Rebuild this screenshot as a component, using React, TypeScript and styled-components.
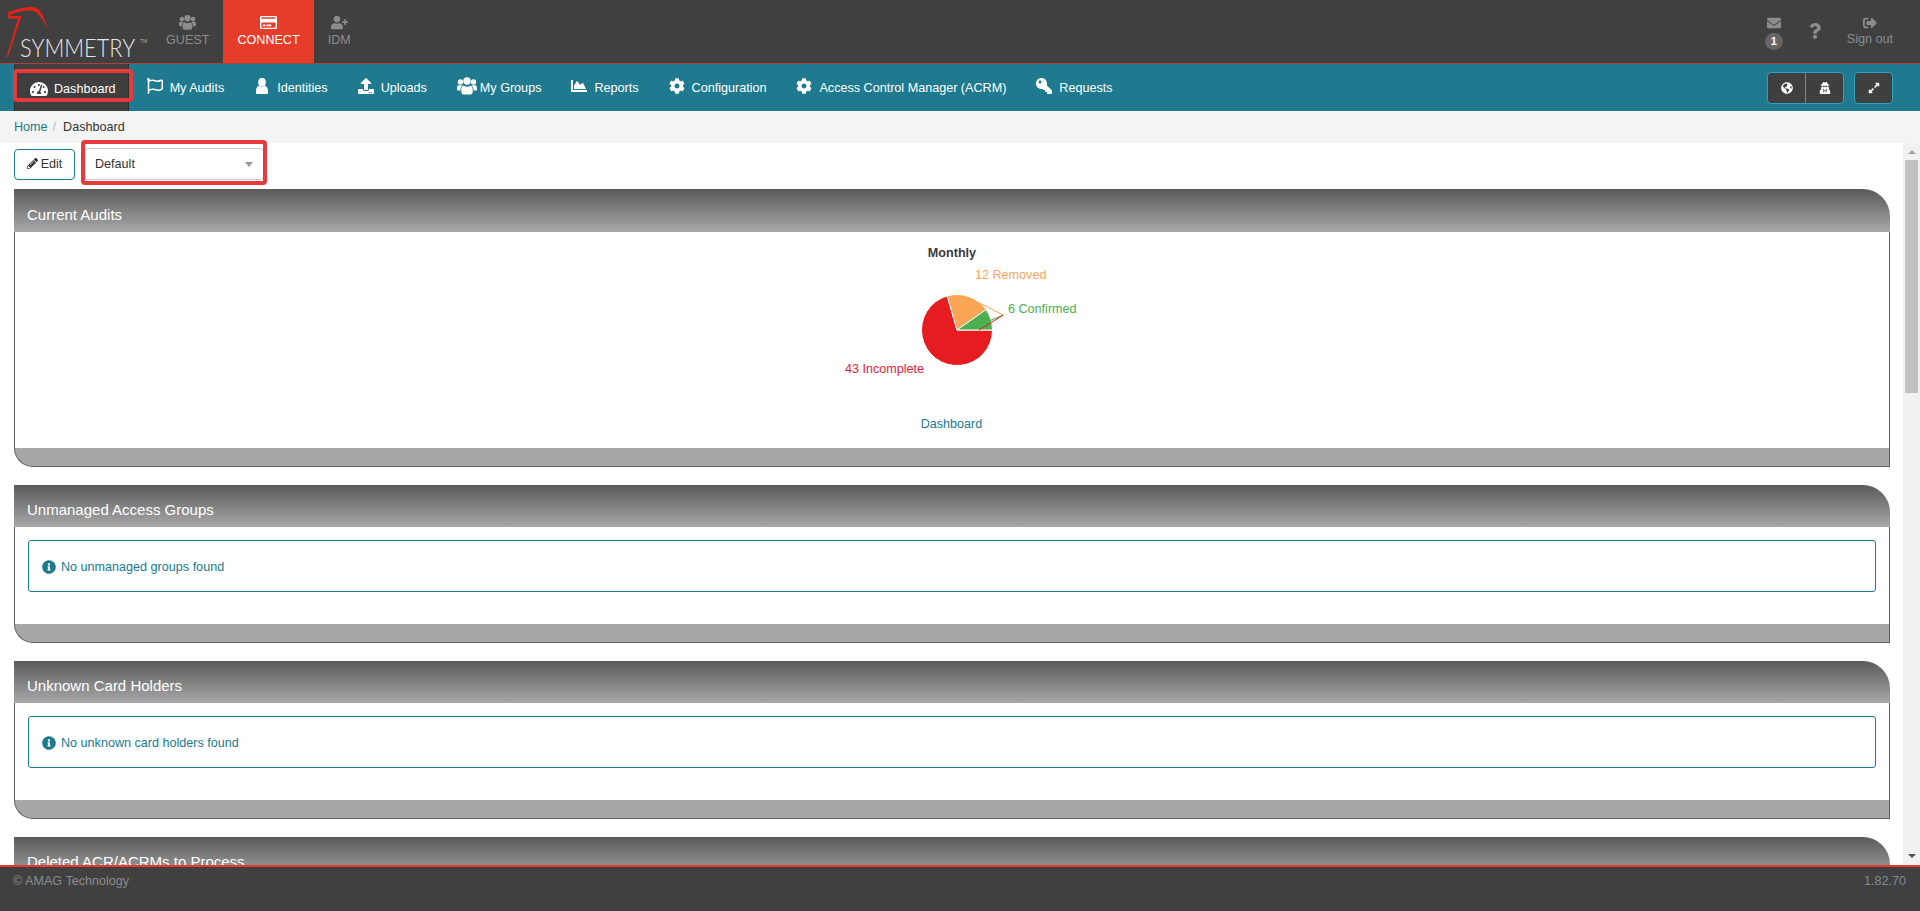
import styled, { createGlobalStyle } from "styled-components";
import {
  FaRegCreditCard, FaUserPlus, FaEnvelope, FaQuestion, FaSignOutAlt, FaTachometerAlt,
  FaRegFlag, FaUpload, FaChartArea, FaCog, FaKey, FaGlobeAmericas, FaUserSecret,
  FaExpandAlt, FaPencilAlt, FaInfoCircle,
} from "react-icons/fa";

const Global = createGlobalStyle`
  html, body { margin: 0; padding: 0; height: 100%; overflow: hidden; }
  body { font-family: "Liberation Sans", Arial, sans-serif; font-size: 12.6px; color: #333; background: #fff; }
`;

const Page = styled.div`
  height: 911px;
  display: flex;
  flex-direction: column;
  overflow: hidden;
`;

const Header = styled.header`
  height: 63px;
  flex: none;
  display: flex;
  background: #404040;
  border-bottom: 1px solid #a5453a;
`;

const LogoBox = styled.div`
  width: 152px;
  height: 63px;
  flex: none;
`;

const Tab = styled.div<{ $on?: boolean }>`
  padding: 14px 14px 0;
  display: flex;
  flex-direction: column;
  align-items: center;
  gap: 2px;
  background: ${(p) => (p.$on ? "#e63d2b" : "transparent")};
  color: ${(p) => (p.$on ? "#fff" : "#8c8c8c")};
  line-height: 15px;
  svg { height: 17px; width: 17px; }
`;

const HeaderRight = styled.div`
  margin-left: auto;
  padding-right: 27px;
  display: flex;
  gap: 24px;
  color: #8c8c8c;
`;

const HeadCol = styled.div`
  padding-top: 16px;
  display: flex;
  flex-direction: column;
  align-items: center;
  line-height: 15px;
  svg { width: 14px; height: 14px; }
`;

const HelpCol = styled(HeadCol)`
  padding-top: 23px;
  svg { width: 16px; height: 16px; }
`;

const Badge = styled.span`
  width: 18px;
  height: 17px;
  margin-top: 3px;
  border-radius: 50%;
  background: #666;
  color: #fff;
  font-size: 11px;
  font-weight: bold;
  line-height: 17px;
  text-align: center;
`;

const SignLabel = styled.span`
  margin-top: 2px;
`;

const NavBar = styled.nav`
  height: 47px;
  flex: none;
  display: flex;
  align-items: stretch;
  padding: 0 27px 0 14px;
  background: #207a8f;
`;

const NavItem = styled.div`
  display: flex;
  align-items: center;
  gap: 7px;
  padding: 0 15px;
  color: #fff;
  white-space: nowrap;
  svg { width: 16px; height: 16px; flex: none; position: relative; top: -2px; }
`;

const ActiveItem = styled(NavItem)`
  position: relative;
  gap: 6px;
  padding: 2px 12px 0 15px;
  margin-right: 3px;
  background: #3f3f3f;
  border: solid #2e2e2e;
  border-width: 0 1px;
  svg { width: 18px; height: 18px; top: 0; }
`;

const RedBox = styled.span`
  position: absolute;
  top: 5px;
  bottom: 9px;
  left: -2px;
  right: -5px;
  border: 4px solid #e8393d;
  border-radius: 4px;
`;

const FlippedKey = styled(FaKey)`
  transform: scaleX(-1);
`;

const WideUsers = styled(UsersIcon)`
  && { width: 20px; height: 18px; margin: 0 -4px 0 0; }
`;

const NavRight = styled.div`
  margin-left: auto;
  display: flex;
  align-items: center;
  gap: 10px;
`;

const BtnGroup = styled.div`
  display: flex;
  height: 30px;
  border: 1px solid #2ea3bd;
  border-radius: 4px;
  background: #3f3f3f;
  color: #fff;
  & > div + div { border-left: 1px solid #2ea3bd; }
`;

const GroupBtn = styled.div`
  width: 37px;
  display: flex;
  align-items: center;
  justify-content: center;
  svg { width: 12px; height: 12px; }
`;

const Crumbs = styled.div`
  height: 32px;
  flex: none;
  display: flex;
  align-items: center;
  padding-left: 14px;
  background: #f4f4f4;
  border-radius: 0 0 4px 4px;
  a { color: #207a8f; }
  i { color: #bbb; font-style: normal; margin: 0 7px 0 5px; }
`;

const Body = styled.div`
  flex: 1;
  min-height: 0;
  display: flex;
`;

const Main = styled.main`
  flex: 1;
  min-width: 0;
  padding: 5px 13px 0 14px;
`;

const Toolbar = styled.div`
  display: flex;
  gap: 9px;
  height: 32px;
  margin-bottom: 9px;
`;

const EditBtn = styled.div`
  width: 61px;
  height: 31px;
  margin-top: 1px;
  padding-bottom: 2px;
  box-sizing: border-box;
  display: flex;
  align-items: center;
  justify-content: center;
  gap: 3px;
  border: 1px solid #207a8f;
  border-radius: 4px;
  svg { width: 11px; height: 11px; }
`;

const SelectBox = styled.div`
  position: relative;
  width: 180px;
  height: 32px;
  box-sizing: border-box;
  display: flex;
  align-items: center;
  padding-left: 10px;
  border: 1px solid #ccc;
  border-radius: 4px;
  &::before {
    content: "";
    position: absolute;
    right: 10px;
    top: 13px;
    border: 4px solid transparent;
    border-top: 5px solid #999;
    border-bottom: 0;
  }
  &::after {
    content: "";
    position: absolute;
    inset: -9px -4px -6px;
    border: 4px solid #e8393d;
    border-radius: 4px;
  }
`;

const Panel = styled.section`
  margin-bottom: 18px;
`;

const PanelHead = styled.div<{ $tall?: boolean }>`
  height: ${(p) => (p.$tall ? "43px" : "42px")};
  box-sizing: border-box;
  padding: 0 13px 8px;
  display: flex;
  align-items: flex-end;
  background: linear-gradient(#5a5a5a, #a8a8a8);
  border-radius: 0 27px 0 0;
  color: #fff;
  font-size: 15px;
  line-height: 18px;
`;

const PanelBody = styled.div`
  height: 97px;
  box-sizing: border-box;
  padding: 13px 13px 0;
  border-left: 1px solid #5f5f5f;
  border-right: 1px solid #5f5f5f;
`;

const ChartBody = styled(PanelBody)`
  height: 216px;
  padding: 8px 0 0;
  display: flex;
  flex-direction: column;
  align-items: center;
`;

const PanelFoot = styled.div`
  height: 19px;
  box-sizing: border-box;
  background: #a6a6a6;
  border: 1px solid #5f5f5f;
  border-top: 0;
  border-radius: 0 0 0 20px;
`;

const Chart = styled.svg`
  width: 400px;
  height: 160px;
  flex: none;
  font-family: "Liberation Sans", Arial, sans-serif;
  font-size: 12.6px;
`;

const ChartLink = styled.a`
  margin-top: 17px;
  margin-left: -1px;
  line-height: 14px;
  color: #207a8f;
`;

const Alert = styled.div`
  height: 52px;
  box-sizing: border-box;
  display: flex;
  align-items: center;
  gap: 5px;
  padding: 2px 0 0 13px;
  border: 1px solid #207a8f;
  border-radius: 3px;
  color: #207a8f;
  svg { width: 14px; height: 14px; }
`;

const Scrollbar = styled.div`
  width: 17px;
  flex: none;
  display: flex;
  flex-direction: column;
  align-items: center;
  background: #f1f1f1;
`;

const ArrowUp = styled.span`
  margin-top: 7px;
  border: 4px solid transparent;
  border-bottom: 4px solid #a3a3a3;
  border-top: 0;
`;

const Thumb = styled.div`
  width: 13px;
  height: 233px;
  margin-top: 6px;
  background: #c1c1c1;
`;

const ArrowDown = styled.span`
  margin-top: auto;
  margin-bottom: 7px;
  border: 4px solid transparent;
  border-top: 4px solid #505050;
  border-bottom: 0;
`;

const Footer = styled.footer`
  position: relative;
  height: 46px;
  flex: none;
  box-sizing: border-box;
  display: flex;
  justify-content: space-between;
  padding: 7px 14px 0 13px;
  background: #404040;
  border-top: 2px solid #e8392c;
  color: #8c8c8c;
  line-height: 15px;
`;

const Version = styled.span`
  color: #7f8c96;
`;

function UsersIcon({ className }: { className?: string }) {
  return (
    <svg className={className} viewBox="0 0 20 18" fill="currentColor">
      <circle cx="3.5" cy="5" r="2.7" />
      <circle cx="16.5" cy="5" r="2.7" />
      <circle cx="10" cy="4" r="3.7" />
      <path d="M1.5 8.2h3l.7.8C4 10 3.4 11.6 3.4 13.5H1.2C.5 13.5 0 13 0 12.2 0 10 .3 8.2 1.5 8.2z" />
      <path d="M18.5 8.2h-3l-.7.8c1.2 1 1.8 2.6 1.8 4.5h2.2c.7 0 1.2-.5 1.2-1.3 0-2.2-.3-4-1.5-4z" />
      <path d="M6.5 8.6c1 .8 2.2 1.2 3.5 1.2s2.5-.4 3.5-1.2c1.8.3 2.3 3 2.3 5.6 0 2-1 3.3-2.6 3.3H6.8c-1.6 0-2.6-1.3-2.6-3.3 0-2.6.5-5.3 2.3-5.6z" />
    </svg>
  );
}

const UserIcon = () => (
  <svg viewBox="0 0 16 16" fill="currentColor">
    <ellipse cx="8" cy="4.4" rx="3.8" ry="4.3" />
    <path d="M2 15v-2.2c0-2.8 1.6-4.8 3.4-4.8.7.6 1.6 1 2.6 1s1.9-.4 2.6-1c1.8 0 3.4 2 3.4 4.8V15c0 .6-.5 1-1 1H3c-.5 0-1-.4-1-1z" />
  </svg>
);

const Logo = () => (
  <svg width="152" height="63" viewBox="0 0 152 63">
    <path
      fill="#e2231a"
      d="M8 12.5C17 9 28 6 35 7.5c6 2 10 11 12.5 21.5C43 19 38 12 32 10.5 25 10 16 12 11 14.5v1.5h10.5L8 57H6.5L18 18.5H8.5z"
    />
    <text transform="translate(20 57) scale(.84 1)" fill="#e6e6e6" fontFamily="Lato, sans-serif" fontWeight="300" fontSize="26">
      SYMMETRY
    </text>
    <text x="140" y="43" fill="#aaa" fontFamily="Liberation Sans, sans-serif" fontSize="5">
      TM
    </text>
  </svg>
);

const PieChart = () => (
  <Chart viewBox="0 0 400 160">
    <text x="200" y="17" textAnchor="middle" fontWeight="bold" fill="#3a3a3a">Monthly</text>
    <text x="223" y="38.5" fill="#fba55a">12 Removed</text>
    <text x="256" y="73" fill="#4caf50">6 Confirmed</text>
    <text x="93" y="133" fill="#e81c3a">43 Incomplete</text>
    <g stroke="#fff" strokeWidth="1">
      <path fill="#e71c20" d="M205 90h35.5A35.5 35.5 0 1 1 195.2 55.9z" />
      <path fill="#faa654" d="M205 90L195.2 55.9A35.5 35.5 0 0 1 234.1 69.6z" />
      <path fill="#4caf50" d="M205 90L234.1 69.6A35.5 35.5 0 0 1 240.5 90z" />
    </g>
    <g fill="none">
      <path stroke="#faa654" d="M228 63.3L251.3 75" />
      <path stroke="#4caf50" d="M238 80.7L251.3 75" />
      <path stroke="#e71c20" d="M227 90L251.3 75" />
    </g>
  </Chart>
);

const menu = [
  { label: "My Audits", icon: <FaRegFlag /> },
  { label: "Identities", icon: <UserIcon /> },
  { label: "Uploads", icon: <FaUpload /> },
  { label: "My Groups", icon: <WideUsers /> },
  { label: "Reports", icon: <FaChartArea /> },
  { label: "Configuration", icon: <FaCog /> },
  { label: "Access Control Manager (ACRM)", icon: <FaCog /> },
  { label: "Requests", icon: <FlippedKey /> },
];

const EmptyPanel = ({ title, text }: { title: string; text: string }) => (
  <Panel>
    <PanelHead>{title}</PanelHead>
    <PanelBody>
      <Alert>
        <FaInfoCircle />
        {text}
      </Alert>
    </PanelBody>
    <PanelFoot />
  </Panel>
);

export default function App() {
  return (
    <Page>
      <Global />
      <Header>
        <LogoBox>
          <Logo />
        </LogoBox>
        <Tab>
          <UsersIcon />
          GUEST
        </Tab>
        <Tab $on>
          <FaRegCreditCard />
          CONNECT
        </Tab>
        <Tab>
          <FaUserPlus />
          IDM
        </Tab>
        <HeaderRight>
          <HeadCol>
            <FaEnvelope />
            <Badge>1</Badge>
          </HeadCol>
          <HelpCol>
            <FaQuestion />
          </HelpCol>
          <HeadCol>
            <FaSignOutAlt />
            <SignLabel>Sign out</SignLabel>
          </HeadCol>
        </HeaderRight>
      </Header>

      <NavBar>
        <ActiveItem>
          <FaTachometerAlt />
          Dashboard
          <RedBox />
        </ActiveItem>
        {menu.map((m) => (
          <NavItem key={m.label}>
            {m.icon}
            {m.label}
          </NavItem>
        ))}
        <NavRight>
          <BtnGroup>
            <GroupBtn>
              <FaGlobeAmericas />
            </GroupBtn>
            <GroupBtn>
              <FaUserSecret />
            </GroupBtn>
          </BtnGroup>
          <BtnGroup>
            <GroupBtn>
              <FaExpandAlt />
            </GroupBtn>
          </BtnGroup>
        </NavRight>
      </NavBar>

      <Crumbs>
        <a>Home</a>
        <i>/</i>
        <span>Dashboard</span>
      </Crumbs>

      <Body>
        <Main>
          <Toolbar>
            <EditBtn>
              <FaPencilAlt />
              Edit
            </EditBtn>
            <SelectBox>Default</SelectBox>
          </Toolbar>

          <Panel>
            <PanelHead $tall>Current Audits</PanelHead>
            <ChartBody>
              <PieChart />
              <ChartLink>Dashboard</ChartLink>
            </ChartBody>
            <PanelFoot />
          </Panel>

          <EmptyPanel title="Unmanaged Access Groups" text="No unmanaged groups found" />
          <EmptyPanel title="Unknown Card Holders" text="No unknown card holders found" />

          <Panel>
            <PanelHead>Deleted ACR/ACRMs to Process</PanelHead>
          </Panel>
        </Main>
        <Scrollbar>
          <ArrowUp />
          <Thumb />
          <ArrowDown />
        </Scrollbar>
      </Body>

      <Footer>
        <span>© AMAG Technology</span>
        <Version>1.82.70</Version>
      </Footer>
    </Page>
  );
}
